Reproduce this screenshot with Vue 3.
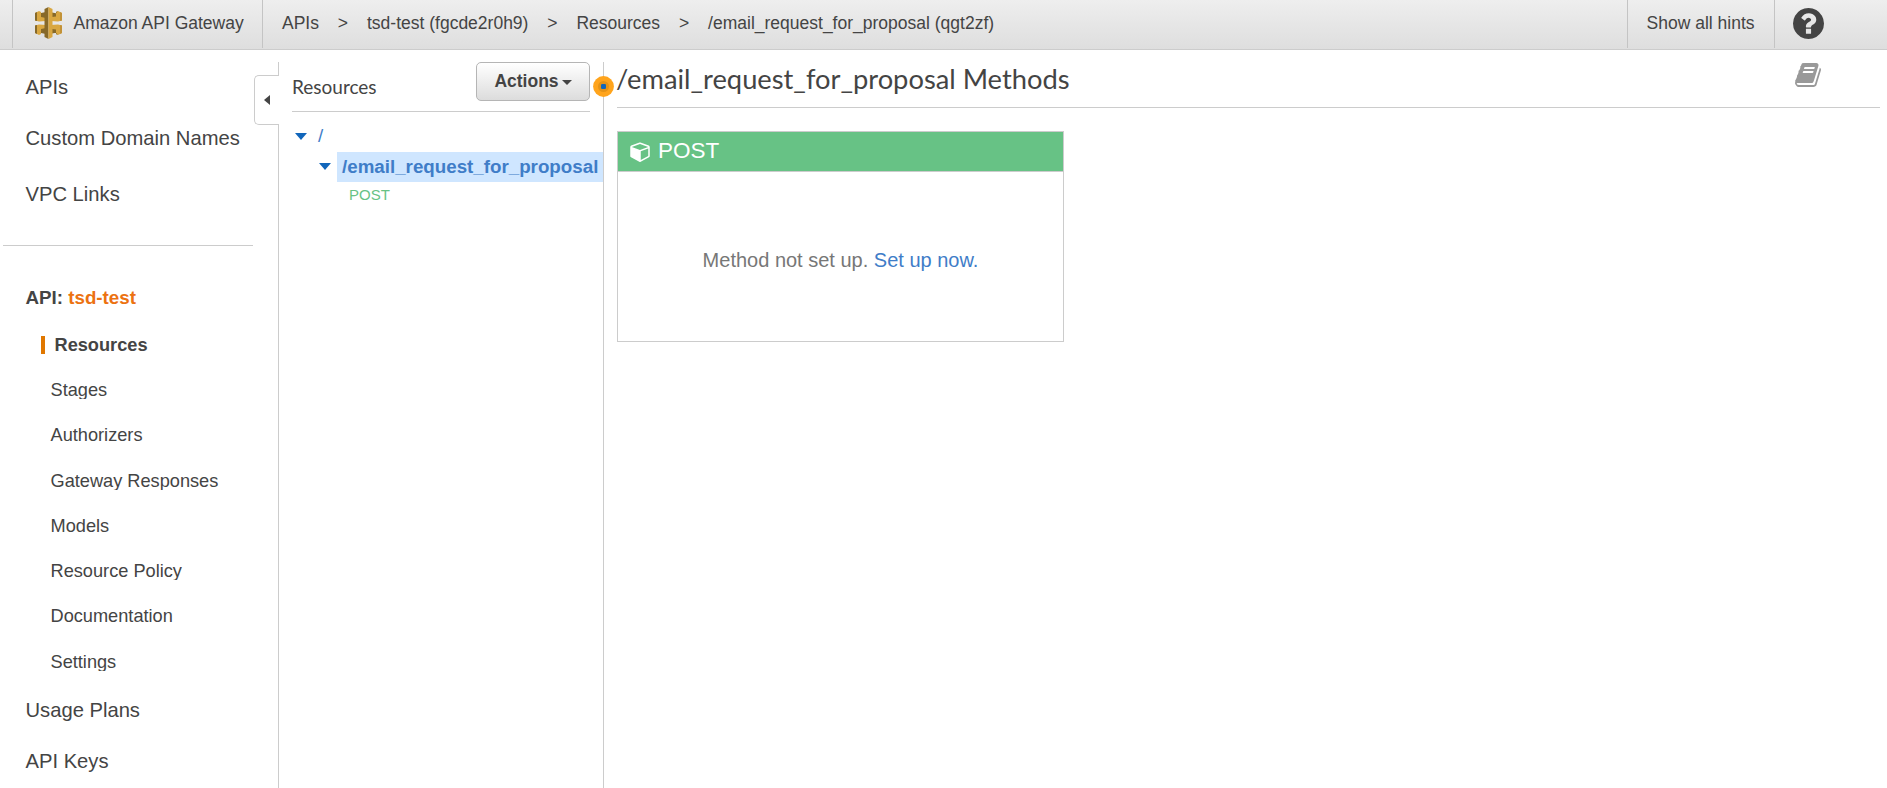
<script setup>
const topLinks = ['APIs', 'Custom Domain Names', 'VPC Links']
const apiLinks = ['Resources', 'Stages', 'Authorizers', 'Gateway Responses', 'Models', 'Resource Policy', 'Documentation', 'Settings']
const bottomLinks = ['Usage Plans', 'API Keys']
const logoHalves = ['', 'translate(0 32) scale(1 -1)']
</script>

<template>
  <div class="console">
    <header class="bar">
      <div class="brand">
        <svg class="logo" viewBox="0 0 27 32" width="27" height="32">
          <g v-for="t in logoHalves" :key="t" :transform="t">
            <path d="M0 6l4-2 2 1v4h5v5l-7 .5L0 13.500z" fill="#d9a741" />
            <path d="M0 6l2-1v9l-2-.5zM6 6l5-1v6l-5-1z" fill="#876929" />
            <path d="M27 6l-4-2-2 1v4h-5v5l7 .5 4-1z" fill="#d9a741" />
            <path d="M23 4l-2 1v4.500l-4 .5V5.500l4 .8z" fill="#876929" />
            <path d="M25 5l2 1v7.500l-2 .5z" fill="#c29237" />
          </g>
          <path d="M13.500 0l-4 2v28l4 2z" fill="#876929" />
          <path d="M13.500 0l4 2v28l-4 2z" fill="#d9a741" />
        </svg>
        <span>Amazon API Gateway</span>
      </div>
      <nav class="crumbs">
        <span>APIs</span><i>&gt;</i><span>tsd-test (fgcde2r0h9)</span><i>&gt;</i><span>Resources</span><i>&gt;</i><span>/email_request_for_proposal (qgt2zf)</span>
      </nav>
      <div class="hints">Show all hints</div>
      <div class="help">
        <svg viewBox="0 0 1536 1536" width="31" height="31"><path fill="#444" d="M896 1248v-192q0-14-9-23t-23-9h-192q-14 0-23 9t-9 23v192q0 14 9 23t23 9h192q14 0 23-9t9-23zm256-672q0-88-55.500-163t-138.500-116-170-41q-243 0-371 213-15 24 8 42l132 100q7 6 19 6 16 0 25-12 53-68 86-92 34-24 86-24 48 0 85.500 26t37.500 59q0 38-20 61t-68 45q-63 28-115.500 86.500t-52.500 125.500v36q0 14 9 23t23 9h192q14 0 23-9t9-23q0-19 21.500-49.500t54.500-49.500q32-18 49-28.500t46-35 44.500-48 28-60.500 12.500-81zm384 192q0 209-103 385.500t-279.500 279.500-385.500 103-385.500-103-279.500-279.500-103-385.500 103-385.500 279.500-279.500 385.500-103 385.500 103 279.500 279.500 103 385.500z" /></svg>
      </div>
    </header>

    <div class="body">
      <aside class="side">
        <ul class="top">
          <li v-for="l in topLinks" :key="l">{{ l }}</li>
        </ul>
        <hr />
        <div class="api">API: <b>tsd-test</b></div>
        <ul class="sub">
          <li v-for="(l, i) in apiLinks" :key="l" :class="{ on: i === 0 }">{{ l }}</li>
        </ul>
        <ul class="bottom">
          <li v-for="l in bottomLinks" :key="l">{{ l }}</li>
        </ul>
        <div class="tab">
          <svg viewBox="0 0 6 10" width="6" height="10"><path d="M6 0v10L0 5z" fill="#444" /></svg>
        </div>
      </aside>

      <section class="tree">
        <div class="tree-head">
          <h2>Resources</h2>
          <button>Actions<svg viewBox="0 0 10 5" width="10" height="5"><path d="M0 0h10L5 5z" fill="#444" /></svg></button>
        </div>
        <div class="node root">
          <svg viewBox="0 0 12 7" width="12" height="7"><path d="M0 0h12L6 7z" fill="#1166bb" /></svg>
          <span>/</span>
        </div>
        <div class="node child">
          <svg viewBox="0 0 12 7" width="12" height="7"><path d="M0 0h12L6 7z" fill="#1166bb" /></svg>
          <span>/email_request_for_proposal</span>
        </div>
        <div class="method">POST</div>
        <svg class="dot" viewBox="0 0 21 21" width="21" height="21">
          <circle cx="10.5" cy="10.5" r="10.4" fill="#ffa41c" />
          <circle cx="10.5" cy="10.5" r="5.5" fill="#e59317" />
          <rect x="8" y="8" width="5" height="5" rx="1.2" fill="#1166bb" />
        </svg>
      </section>

      <main class="main">
        <div class="main-head">
          <h1>/email_request_for_proposal Methods</h1>
          <svg class="book" viewBox="62 128 1668 1536" preserveAspectRatio="none" width="26" height="24"><path fill="#999" d="M1703 478q40 57 18 129l-275 906q-19 64-76.500 107.500t-122.500 43.500h-923q-77 0-148.500-53.500t-99.500-131.500q-24-67-2-127 0-4 3-27t4-37q1-8-3-21.500t-3-19.500q2-11 8-21t16.500-23.500 16.500-23.500q23-38 45-91.500t30-91.500q3-10 .5-30t-.5-28q3-11 17-28t17-23q21-36 42-92t25-90q1-9-2.500-32t.5-28q4-13 22-30.500t22-22.500q19-26 42.500-84.500t27.500-96.500q1-8-3-25.500t-2-26.500q2-8 9-18t18-23 17-21q8-12 16.500-30.500t15-35 16-36 19.500-32 26.500-23.500 36-11.500 47.500 5.500l-1 3q38-9 51-9h761q74 0 114 56t18 130l-274 906q-36 119-71.500 153.500t-128.500 34.500h-869q-27 0-38 15-11 16-1 43 24 70 144 70h923q29 0 56-15.500t35-41.500l300-987q7-22 5-57 38 15 59 43zm-1064 2q-4 13 2 22.500t20 9.500h608q13 0 25.500-9.500t16.500-22.500l21-64q4-13-2-22.500t-20-9.500h-608q-13 0-25.500 9.500t-16.500 22.500zm-83 256q-4 13 2 22.500t20 9.500h608q13 0 25.500-9.500t16.500-22.500l21-64q4-13-2-22.500t-20-9.500h-608q-13 0-25.500 9.500t-16.500 22.500z" /></svg>
        </div>
        <article class="card">
          <div class="card-head">
            <svg viewBox="0 0 1664 1792" width="20" height="21"><path fill="#fff" d="M896 1629l640-349v-636l-640 233v752zm-64-865l698-254-698-254-698 254zm832-252v768q0 35-18 65t-49 47l-704 384q-28 16-61 16t-61-16l-704-384q-31-17-49-47t-18-65v-768q0-40 23-73t61-47l704-256q22-8 44-8t44 8l704 256q38 14 61 47t23 73z" /></svg>
            <span>POST</span>
          </div>
          <div class="card-body"><p>Method not set up. <a>Set up now.</a></p></div>
        </article>
      </main>
    </div>
  </div>
</template>

<style>
body { margin: 0; background: #fff; overflow: hidden; }
</style>

<style scoped>
* { box-sizing: border-box; }
.console { width: 1887px; height: 788px; overflow: hidden; display: flex; flex-direction: column; color: #444; font-family: "Liberation Sans", Arial, sans-serif; white-space: nowrap; }
ul { list-style: none; margin: 0; padding: 0; }
h1, h2, p { margin: 0; font-weight: 400; }
svg { display: block; flex: none; }

.bar { height: 50px; flex: none; display: flex; border-bottom: 1px solid #ccc; background: linear-gradient(#eee, #dedede); font-size: 17.5px; line-height: 46px; }
.brand { margin-left: 12px; width: 251px; height: 48px; border: solid #c4c4c4; border-width: 0 1px; padding-left: 22px; display: flex; }
.logo { margin: 7px 11.5px 0 0; }
.crumbs { flex: 1; display: flex; padding-left: 19px; }
.crumbs i { font-style: normal; width: 48px; text-align: center; }
.hints { width: 148px; height: 48px; border: solid #c4c4c4; border-width: 0 1px; padding-left: 18.6px; }
.help { width: 112px; padding: 8px 0 0 18px; }

.body { flex: 1; display: flex; min-height: 0; padding-top: 12px; }
.side { width: 279px; position: relative; border-right: 1px solid #ccc; padding-top: 13px; font-size: 20.2px; }
.side li, .api { padding-left: 25.5px; line-height: 24px; height: 24px; }
.top li + li { margin-top: 27px; }
.top li + li + li { margin-top: 32px; }
hr { width: 250px; height: 1px; border: 0; background: #ccc; margin: 39px 0 40px 3px; }
.api { font-size: 18.75px; font-weight: 700; }
.api b { color: #ec7211; }
.side .sub { margin-top: 26px; }
.side .sub li { height: 18px; line-height: 18px; font-size: 18.2px; overflow: hidden; padding-left: 50.5px; margin-bottom: 27.27px; }
.side .sub li.on { font-weight: 700; margin-left: 41px; padding-left: 9.5px; border-left: 4px solid #e07700; margin-bottom: 27px; }
.bottom li + li { margin-top: 27px; }
.tab { position: absolute; left: 254px; top: 13px; width: 25px; height: 50px; background: #fff; border: 1px solid #ccc; border-right: 0; border-radius: 5px 0 0 5px; padding: 19px 0 0 9px; }

.tree { width: 325px; position: relative; border-right: 1px solid #ccc; }
.tree-head { margin: 0 13px; height: 50px; border-bottom: 1px solid #ccc; display: flex; justify-content: space-between; align-items: flex-start; }
h2 { font: 19px/24px Lato, sans-serif; margin-top: 13px; }
button { width: 114px; height: 39px; border: 1px solid #b5b5b5; border-radius: 5px; background: linear-gradient(#fff, #dcdcdc); font: bold 17.5px/37px "Liberation Sans", Arial, sans-serif; color: #444; padding: 0; display: flex; justify-content: center; }
button svg { margin: 17px 0 0 3px; }
.node { display: flex; align-items: center; color: #3f7dc8; height: 30px; font-size: 18.75px; line-height: 30px; }
.root { margin: 9px 0 1px 16px; }
.root span { margin-left: 11px; }
.child { margin-left: 40px; font-weight: 700; }
.child svg { margin-top: -2px; }
.child span { flex: 1; margin-left: 6px; padding-left: 5px; background: #cfe6ff; line-height: 29px; height: 30px; }
.method { margin-left: 70px; color: #67c285; font-size: 15px; line-height: 26px; }
.dot { position: absolute; left: 314px; top: 14px; z-index: 2; }

.main { flex: 1; padding: 0 7px 0 13px; }
.main-head { height: 46px; border-bottom: 1px solid #ccc; display: flex; justify-content: space-between; }
h1 { font: 27.3px/34px Lato, sans-serif; margin-left: -1px; }
.book { margin: 1px 59px 0 0; }
.card { width: 447px; height: 211px; margin-top: 23px; border: 1px solid #ccc; display: flex; flex-direction: column; }
.card-head { height: 40px; background: #67c285; border-bottom: 1px solid #ccc; color: #fff; display: flex; align-items: center; padding-left: 12px; font-size: 22.5px; line-height: 37px; }
.card-head span { margin: -3px 0 0 8px; }
.card-body { flex: 1; display: flex; align-items: center; justify-content: center; font-size: 20px; color: #777; padding-top: 7px; }
.card-body a { color: #3f7dc8; }
</style>
